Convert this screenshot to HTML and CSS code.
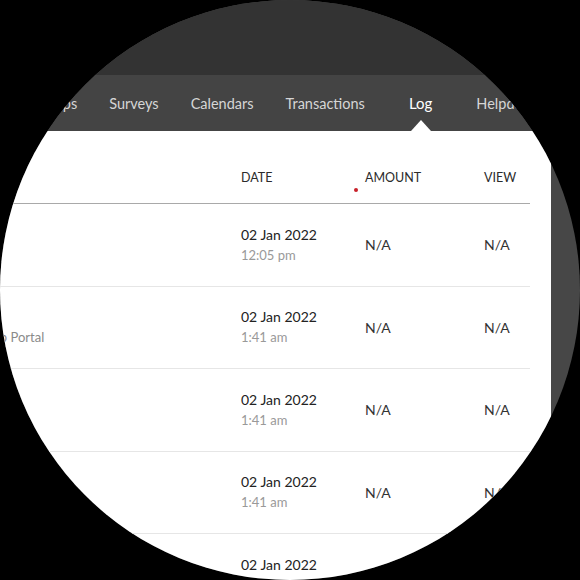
FILE: index.html
```html
<!DOCTYPE html>
<html lang="en">
<head>
    <meta charset="UTF-8">
    <meta name="viewport" content="width=device-width, initial-scale=1.0">
    <title>Activity Log</title>
    <link rel="stylesheet" href="styles.css">
</head>
<body>
    <div class="lens">
        <div class="topbar"></div>

        <nav class="tabs">
            <ul>
                <li><a href="#">Groups</a></li>
                <li><a href="#">Surveys</a></li>
                <li><a href="#">Calendars</a></li>
                <li><a href="#">Transactions</a></li>
                <li class="active"><a href="#">Log</a></li>
                <li><a href="#">Helpdesk</a></li>
            </ul>
        </nav>

        <div class="content">
            <section class="panel">
                <table class="log">
                    <thead>
                        <tr>
                            <th class="col-desc">Activity</th>
                            <th class="col-date">Date</th>
                            <th class="col-amount"><span class="sort-dot"></span>Amount</th>
                            <th class="col-view">View</th>
                        </tr>
                    </thead>
                    <tbody>
                        <tr>
                            <td class="desc">Profile</td>
                            <td><div class="day">02 Jan 2022</div><div class="time">12:05 pm</div></td>
                            <td>N/A</td>
                            <td>N/A</td>
                        </tr>
                        <tr>
                            <td class="desc"><div>Login</div><div class="sub">Signed in via Membership Portal</div></td>
                            <td><div class="day">02 Jan 2022</div><div class="time">1:41 am</div></td>
                            <td>N/A</td>
                            <td>N/A</td>
                        </tr>
                        <tr>
                            <td class="desc">Email</td>
                            <td><div class="day">02 Jan 2022</div><div class="time">1:41 am</div></td>
                            <td>N/A</td>
                            <td>N/A</td>
                        </tr>
                        <tr>
                            <td class="desc">Verify</td>
                            <td><div class="day">02 Jan 2022</div><div class="time">1:41 am</div></td>
                            <td>N/A</td>
                            <td>N/A</td>
                        </tr>
                        <tr>
                            <td class="desc">Signup</td>
                            <td><div class="day">02 Jan 2022</div><div class="time">1:40 am</div></td>
                            <td>N/A</td>
                            <td>N/A</td>
                        </tr>
                    </tbody>
                </table>
            </section>
        </div>
    </div>
</body>
</html>
```

FILE: styles.css
```css
body {
    font-family: Lato, "Open Sans", sans-serif;
    margin: 0;
    padding: 0;
    background-color: #000;
}

.lens {
    width: 580px;
    height: 580px;
    border-radius: 50%;
    overflow: hidden;
    background: #474747;
}

.topbar {
    height: 75px;
    background: #333;
}

.tabs {
    height: 56px;
    background: #444;
    overflow: hidden;
}

.tabs ul {
    list-style-type: none;
    margin: 0 0 0 31px;
    padding: 0;
    display: flex;
    height: 100%;
    gap: 32px;
}

.tabs li {
    position: relative;
    display: flex;
    align-items: center;
    flex-shrink: 0;
}

.tabs a {
    color: #d6d6d6;
    text-decoration: none;
    font-size: 14.5px;
    white-space: nowrap;
}

.tabs li.active {
    margin: 0 12px;
}

.tabs li.active a {
    color: #fff;
    font-size: 15px;
}

.tabs li.active::after {
    content: "";
    position: absolute;
    left: 50%;
    bottom: 0;
    margin-left: -10px;
    border-left: 10px solid transparent;
    border-right: 10px solid transparent;
    border-bottom: 11px solid #fff;
}

.content {
    display: flex;
}

.panel {
    background: #fff;
    margin-left: -159px;
    width: 710px;
    height: 460px;
    padding: 0 21px 0 20px;
    box-sizing: border-box;
    flex-shrink: 0;
}

.log {
    width: 669px;
    border-collapse: collapse;
    table-layout: fixed;
    color: #333;
}

.log th {
    text-align: left;
    font-weight: normal;
    font-size: 12.5px;
    text-transform: uppercase;
    line-height: 16px;
    padding: 39px 0 17px;
    border-bottom: 1px solid #a9a9a9;
    color: #2b2b2b;
}

.log td {
    height: 82.5px;
    padding: 0;
    border-bottom: 1px solid #e6e6e6;
    font-size: 14px;
    vertical-align: middle;
    color: #333;
    box-sizing: border-box;
}

.col-desc {
    width: 380px;
}

.col-date {
    width: 124px;
}

.col-amount {
    width: 119px;
    position: relative;
}

.log .desc {
    color: #555;
    line-height: 20px;
}

.log .sub {
    font-size: 13px;
    color: #8a8a8a;
}

.day {
    color: #222;
    line-height: 21px;
}

.time {
    color: #999;
    font-size: 13px;
    line-height: 21px;
}

.sort-dot {
    position: absolute;
    left: -11px;
    top: 57px;
    width: 4px;
    height: 4px;
    border-radius: 50%;
    background: #c8202a;
}
```
